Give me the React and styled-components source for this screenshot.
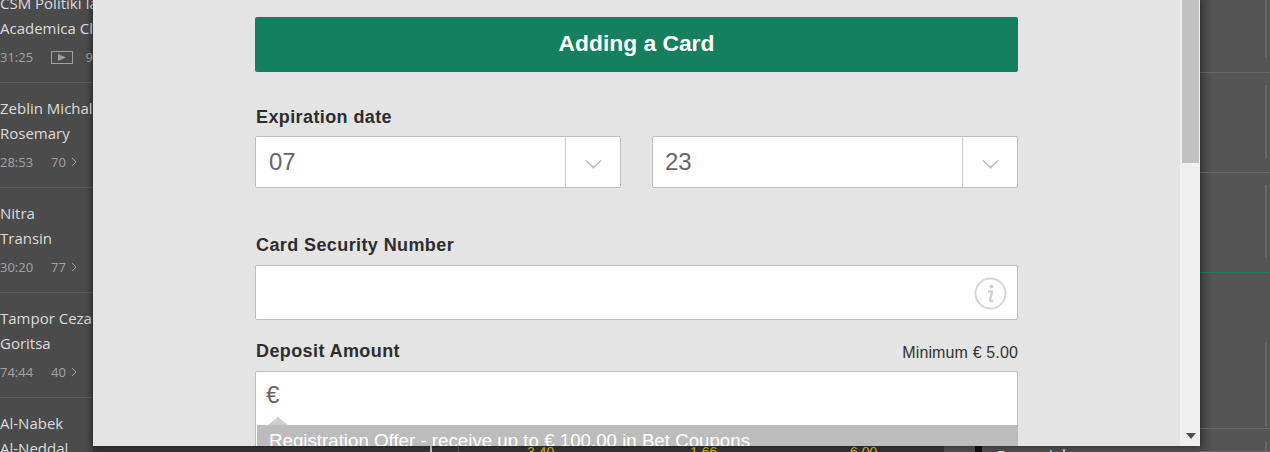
import React from "react";
import styled, { createGlobalStyle } from "styled-components";

const Global = createGlobalStyle`
  html, body { margin: 0; padding: 0; width: 1270px; height: 452px; overflow: hidden; background: #4b4b4b; }
  * { box-sizing: border-box; }
`;

const Page = styled.div`
  display: grid;
  grid-template-columns: 93px 1107px 70px;
  grid-template-rows: 446px 6px;
  width: 1270px;
  height: 452px;
  overflow: hidden;
`;

/* ---------- left list ---------- */
const Sidebar = styled.aside`
  grid-row: 1 / 3;
  grid-column: 1;
  background: #4b4b4b;
  overflow: hidden;
  white-space: nowrap;
  font-family: "Open Sans", "Liberation Sans", sans-serif;
  position: relative;
  z-index: 1;
  box-shadow: inset -6px 0 6px -6px rgba(0, 0, 0, 0.25);
`;

const SidebarList = styled.div`
  margin-top: -22px;
`;

const Match = styled.div`
  height: 105px;
  padding-top: 13px;
  border-bottom: 1px solid #5c5c5c;
`;

const Team = styled.div`
  height: 25px;
  line-height: 25px;
  font-size: 15px;
  color: #dcdcdc;
`;

const Meta = styled.div`
  display: flex;
  align-items: center;
  height: 20px;
  margin-top: 6px;
  font-size: 13px;
  color: #a3a3a3;
`;

const Clock = styled.span`
  width: 51px;
`;

const VideoBox = styled.span`
  display: flex;
  align-items: center;
  justify-content: center;
  width: 22px;
  height: 13px;
  margin-right: 13px;
  border: 1px solid #a0a0a0;
`;

const Chev = styled.svg`
  width: 8px;
  height: 10px;
  margin-left: 4px;
  fill: none;
  stroke: #a3a3a3;
  stroke-width: 1;
`;

/* ---------- modal ---------- */
const Modal = styled.main`
  grid-row: 1;
  grid-column: 2;
  display: flex;
  background: #e4e4e4;
  overflow: hidden;
  position: relative;
  z-index: 2;
  box-shadow: 0 0 8px rgba(0, 0, 0, 0.45);
`;

const Body = styled.div`
  flex: 1;
  padding: 17px 162px 0;
  font-family: "Liberation Sans", Arial, sans-serif;
`;

const Header = styled.h1`
  margin: 0;
  height: 55px;
  line-height: 52px;
  text-align: center;
  font-size: 22.8px;
  font-weight: 700;
  color: #fff;
  background: #15805e;
  border-radius: 2px;
`;

const Label = styled.label`
  display: block;
  padding-left: 1px;
  font-size: 18px;
  letter-spacing: 0.4px;
  line-height: 20px;
  font-weight: 700;
  color: #2d2d2d;
`;

const ExpirationLabel = styled(Label)`
  margin-top: 35px;
`;

const SecurityLabel = styled(Label)`
  margin-top: 47px;
`;

const DateRow = styled.div`
  display: flex;
  gap: 31px;
  margin-top: 9px;
`;

const Select = styled.div`
  flex: 1;
  display: flex;
  height: 52px;
  background: #fff;
  border: 1px solid #bdbdbd;
  border-radius: 2px;
`;

const SelectValue = styled.div`
  flex: 1;
  padding-left: ${(p) => p.$pad}px;
  line-height: 50px;
  font-size: 24px;
  color: #666;
`;

const SelectArrow = styled.div`
  width: 55px;
  display: flex;
  align-items: center;
  justify-content: center;
  border-left: 1px solid #ccc;
`;

const TextField = styled.div`
  display: flex;
  align-items: center;
  justify-content: flex-end;
  height: 55px;
  margin-top: 10px;
  padding-right: 10px;
  background: #fff;
  border: 1px solid #bdbdbd;
  border-radius: 2px;
`;

const InfoIcon = styled.svg`
  width: 33px;
  height: 33px;
  margin-top: 1px;
`;

const DepositHead = styled.div`
  display: flex;
  justify-content: space-between;
  align-items: flex-end;
  margin-top: 21px;
`;

const MinNote = styled.span`
  font-size: 16px;
  letter-spacing: 0.14px;
  line-height: 16px;
  color: #333;
`;

const AmountField = styled.div`
  height: 90px;
  margin-top: 10px;
  background: #fff;
  border: 1px solid #bdbdbd;
  border-radius: 2px;
  position: relative;
  overflow: hidden;
`;

const Currency = styled.div`
  padding-left: 10px;
  height: 53px;
  line-height: 46px;
  font-size: 24px;
  color: #666;
`;

const Offer = styled.div`
  position: absolute;
  left: 1px;
  right: -1px;
  top: 53px;
  height: 40px;
  padding-left: 12px;
  line-height: 31px;
  font-size: 18.72px;
  color: #fff;
  background: #bcbcbc;
  &::before {
    content: "";
    position: absolute;
    left: 11px;
    top: -8px;
    border-left: 10px solid transparent;
    border-right: 10px solid transparent;
    border-bottom: 8px solid #bcbcbc;
    opacity: 0.75;
  }
`;

const Scrollbar = styled.div`
  width: 20px;
  background: #f0f0f0;
  display: flex;
  flex-direction: column;
  align-items: stretch;
  justify-content: space-between;
  padding: 0 1px 7px 2px;
`;

const Thumb = styled.div`
  height: 163px;
  background: #c1c1c1;
`;

const ScrollDown = styled.div`
  align-self: center;
  width: 0;
  height: 0;
  border-left: 5px solid transparent;
  border-right: 5px solid transparent;
  border-top: 6px solid #505050;
`;

/* ---------- right panel ---------- */
const RightPanel = styled.aside`
  grid-row: 1 / 3;
  grid-column: 3;
  background: linear-gradient(90deg, #454545 0, #565656 14px);
  position: relative;
`;

const RightRow = styled.div`
  height: ${(p) => p.$h}px;
  border-bottom: 1px solid ${(p) => p.$line || "#686868"};
  display: flex;
  justify-content: flex-end;
  padding: ${(p) => p.$top}px 3px 0 0;
`;

const RightBar = styled.div`
  width: 2px;
  height: ${(p) => p.$h}px;
  background: #686868;
`;

/* ---------- strip under the modal ---------- */
const BottomStrip = styled.div`
  grid-row: 2;
  grid-column: 2;
  background: #353535;
  overflow: hidden;
  font-family: "Liberation Sans", Arial, sans-serif;
  display: flex;
`;

const StripCell = styled.div`
  width: ${(p) => p.$w}px;
  flex: none;
  height: 6px;
  overflow: hidden;
  background: ${(p) => p.$bg || "transparent"};
  border-left: ${(p) => (p.$line ? `${p.$lw || 1}px solid ${p.$line}` : "none")};
  color: ${(p) => p.$color || "#dcbc00"};
  font-size: 14px;
  line-height: 12px;
  white-space: nowrap;
  padding-top: ${(p) => p.$top || 0}px;
`;

const LighterRegion = styled.div`
  display: flex;
  flex: none;
  width: 256px;
  background: #4f4f4f;
`;

const Chevron = () => (
  <svg width="17" height="10" viewBox="0 0 17 10" fill="none" stroke="#bdbdbd" strokeWidth="1.7" style={{ marginTop: 3 }}>
    <path d="M1 1.5 L8.5 8.5 L16 1.5" />
  </svg>
);

const teams = [
  { a: "CSM Politiki Iasi", b: "Academica Clinceni", t: "31:25", n: "9", video: true },
  { a: "Zeblin Michalovce", b: "Rosemary", t: "28:53", n: "70" },
  { a: "Nitra", b: "Transin", t: "30:20", n: "77" },
  { a: "Tampor Cezar", b: "Goritsa", t: "74:44", n: "40" },
  { a: "Al-Nabek", b: "Al-Neddal", t: "", n: "" },
];

export default function App() {
  return (
    <Page>
      <Global />
      <Sidebar>
        <SidebarList>
          {teams.map((m) => (
            <Match key={m.a}>
              <Team>{m.a}</Team>
              <Team>{m.b}</Team>
              <Meta>
                <Clock>{m.t}</Clock>
                {m.video && (
                  <VideoBox>
                    <svg width="8" height="7" viewBox="0 0 8 7"><path d="M0 0 L8 3.5 L0 7Z" fill="#a0a0a0" /></svg>
                  </VideoBox>
                )}
                {m.n}
                {m.n && !m.video && (
                  <Chev viewBox="0 0 8 10"><path d="M2 1 L6 5 L2 9" /></Chev>
                )}
              </Meta>
            </Match>
          ))}
        </SidebarList>
      </Sidebar>

      <Modal>
        <Body>
          <Header>Adding a Card</Header>
          <ExpirationLabel>Expiration date</ExpirationLabel>
          <DateRow>
            <Select>
              <SelectValue $pad={13}>07</SelectValue>
              <SelectArrow><Chevron /></SelectArrow>
            </Select>
            <Select>
              <SelectValue $pad={12}>23</SelectValue>
              <SelectArrow><Chevron /></SelectArrow>
            </Select>
          </DateRow>
          <SecurityLabel>Card Security Number</SecurityLabel>
          <TextField>
            <InfoIcon viewBox="0 0 33 33" fill="none">
              <circle cx="16.5" cy="16.5" r="15" stroke="#d6d6d6" strokeWidth="2" />
              <circle cx="17.5" cy="9.5" r="2" fill="#d0d0d0" />
              <path d="M14 14.5 H18 L16 23.5 Q16 25 19 23.5" stroke="#d0d0d0" strokeWidth="2.4" />
            </InfoIcon>
          </TextField>
          <DepositHead>
            <Label as="span">Deposit Amount</Label>
            <MinNote>Minimum € 5.00</MinNote>
          </DepositHead>
          <AmountField>
            <Currency>€</Currency>
            <Offer>Registration Offer - receive up to € 100.00 in Bet Coupons</Offer>
          </AmountField>
        </Body>
        <Scrollbar>
          <Thumb />
          <ScrollDown />
        </Scrollbar>
      </Modal>

      <RightPanel>
        <RightRow $h={73} $top={0}><RightBar $h={58} /></RightRow>
        <RightRow $h={100} $top={12}><RightBar $h={73} /></RightRow>
        <RightRow $h={100} $top={12} $line="#1d7a5b"><RightBar $h={73} /></RightRow>
        <RightRow $h={156} $top={69}><RightBar $h={84} /></RightRow>
        <RightRow $h={23} $top={13}><RightBar $h={10} /></RightRow>
      </RightPanel>

      <BottomStrip>
        <StripCell $w={337} />
        <StripCell $w={28} $line="#c9c9c9" $lw={2} />
        <StripCell $w={69} $line="#555" />
        <StripCell $w={163}>3.40</StripCell>
        <StripCell $w={160}>1.66</StripCell>
        <StripCell $w={94}>6.00</StripCell>
        <LighterRegion>
          <StripCell $w={31} />
          <StripCell $w={7} $bg="#111" />
          <StripCell $w={15} />
          <StripCell $w={66} $color="#ddd" $top={4}>Personal</StripCell>
          <StripCell $w={2} $bg="linear-gradient(#4f4f4f 0 3px, #c9c9c9 3px)" />
        </LighterRegion>
      </BottomStrip>
    </Page>
  );
}
